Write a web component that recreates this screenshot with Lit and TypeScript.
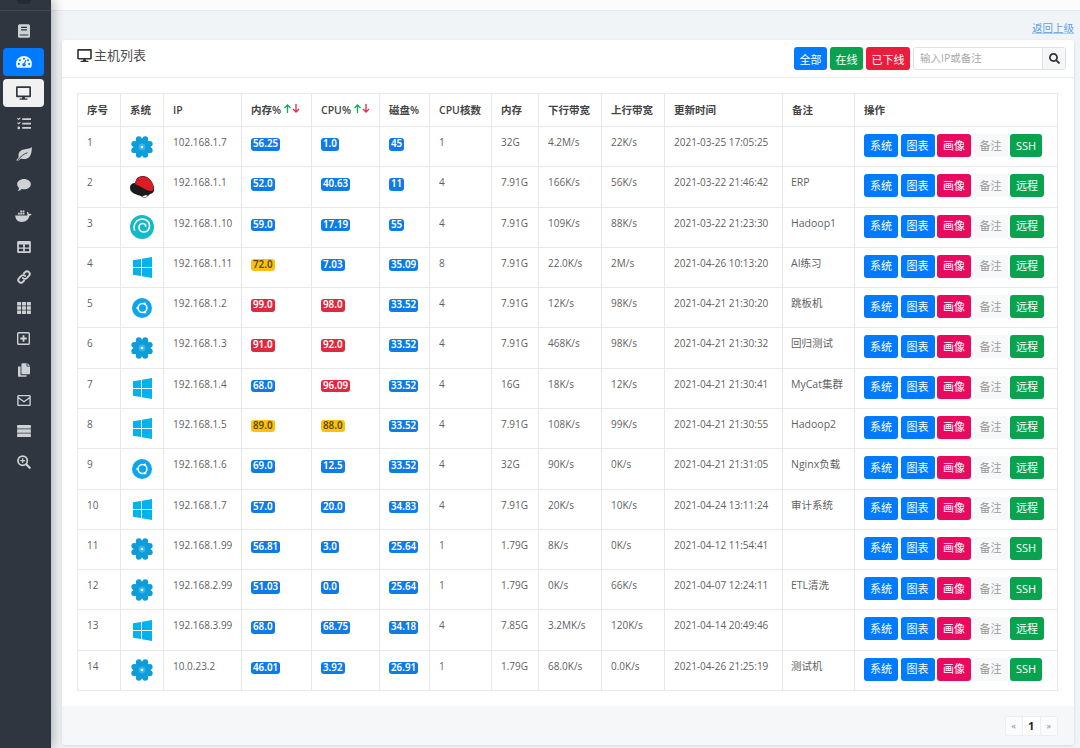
import { LitElement, html, svg, css } from 'lit';
import { customElement } from 'lit/decorators.js';

type Os = 'flower' | 'redhat' | 'swirl' | 'win' | 'ring';
interface Host {
  os: Os;
  ip: string;
  mem: string;
  cpu: string;
  disk: string;
  cores: string;
  ram: string;
  down: string;
  up: string;
  time: string;
  note: string;
  remote: string;
}

const hosts: Host[] = [
  { os: 'flower', ip: '102.168.1.7', mem: '56.25', cpu: '1.0', disk: '45', cores: '1', ram: '32G', down: '4.2M/s', up: '22K/s', time: '2021-03-25 17:05:25', note: '', remote: 'SSH' },
  { os: 'redhat', ip: '192.168.1.1', mem: '52.0', cpu: '40.63', disk: '11', cores: '4', ram: '7.91G', down: '166K/s', up: '56K/s', time: '2021-03-22 21:46:42', note: 'ERP', remote: '远程' },
  { os: 'swirl', ip: '192.168.1.10', mem: '59.0', cpu: '17.19', disk: '55', cores: '4', ram: '7.91G', down: '109K/s', up: '88K/s', time: '2021-03-22 21:23:30', note: 'Hadoop1', remote: '远程' },
  { os: 'win', ip: '192.168.1.11', mem: '72.0', cpu: '7.03', disk: '35.09', cores: '8', ram: '7.91G', down: '22.0K/s', up: '2M/s', time: '2021-04-26 10:13:20', note: 'AI练习', remote: '远程' },
  { os: 'ring', ip: '192.168.1.2', mem: '99.0', cpu: '98.0', disk: '33.52', cores: '4', ram: '7.91G', down: '12K/s', up: '98K/s', time: '2021-04-21 21:30:20', note: '跳板机', remote: '远程' },
  { os: 'flower', ip: '192.168.1.3', mem: '91.0', cpu: '92.0', disk: '33.52', cores: '4', ram: '7.91G', down: '468K/s', up: '98K/s', time: '2021-04-21 21:30:32', note: '回归测试', remote: '远程' },
  { os: 'win', ip: '192.168.1.4', mem: '68.0', cpu: '96.09', disk: '33.52', cores: '4', ram: '16G', down: '18K/s', up: '12K/s', time: '2021-04-21 21:30:41', note: 'MyCat集群', remote: '远程' },
  { os: 'win', ip: '192.168.1.5', mem: '89.0', cpu: '88.0', disk: '33.52', cores: '4', ram: '7.91G', down: '108K/s', up: '99K/s', time: '2021-04-21 21:30:55', note: 'Hadoop2', remote: '远程' },
  { os: 'ring', ip: '192.168.1.6', mem: '69.0', cpu: '12.5', disk: '33.52', cores: '4', ram: '32G', down: '90K/s', up: '0K/s', time: '2021-04-21 21:31:05', note: 'Nginx负载', remote: '远程' },
  { os: 'win', ip: '192.168.1.7', mem: '57.0', cpu: '20.0', disk: '34.83', cores: '4', ram: '7.91G', down: '20K/s', up: '10K/s', time: '2021-04-24 13:11:24', note: '审计系统', remote: '远程' },
  { os: 'flower', ip: '192.168.1.99', mem: '56.81', cpu: '3.0', disk: '25.64', cores: '1', ram: '1.79G', down: '8K/s', up: '0K/s', time: '2021-04-12 11:54:41', note: '', remote: 'SSH' },
  { os: 'flower', ip: '192.168.2.99', mem: '51.03', cpu: '0.0', disk: '25.64', cores: '1', ram: '1.79G', down: '0K/s', up: '66K/s', time: '2021-04-07 12:24:11', note: 'ETL清洗', remote: 'SSH' },
  { os: 'win', ip: '192.168.3.99', mem: '68.0', cpu: '68.75', disk: '34.18', cores: '4', ram: '7.85G', down: '3.2MK/s', up: '120K/s', time: '2021-04-14 20:49:46', note: '', remote: '远程' },
  { os: 'flower', ip: '10.0.23.2', mem: '46.01', cpu: '3.92', disk: '26.91', cores: '1', ram: '1.79G', down: '68.0K/s', up: '0.0K/s', time: '2021-04-26 21:25:19', note: '测试机', remote: 'SSH' },
];

const colWidths = [43, 43, 78, 70, 68, 50, 62, 47, 63, 63, 118, 72, 203];

// thresholds seen in the table: over 90 red, 70-90 amber, otherwise blue
function level(value: string) {
  const n = parseFloat(value);
  if (n >= 90) return 'danger';
  if (n >= 70) return 'warning';
  return 'primary';
}

const desktopPath = 'M528 0H48C21.5 0 0 21.5 0 48v320c0 26.5 21.5 48 48 48h192l-16 48h-72c-13.3 0-24 10.7-24 24s10.7 24 24 24h272c13.3 0 24-10.7 24-24s-10.7-24-24-24h-72l-16-48h192c26.5 0 48-21.5 48-48V48c0-26.5-21.5-48-48-48zm-16 352H64V64h448v288z';
const searchPath = 'M505 442.7L405.3 343c-4.5-4.5-10.6-7-17-7H372c27.6-35.3 44-79.7 44-128C416 93.1 322.9 0 208 0S0 93.1 0 208s93.1 208 208 208c48.3 0 92.7-16.4 128-44v16.3c0 6.4 2.5 12.5 7 17l99.7 99.7c9.4 9.4 24.6 9.4 33.9 0l28.3-28.3c9.4-9.4 9.4-24.6.1-34zM208 336c-70.7 0-128-57.2-128-128 0-70.7 57.2-128 128-128 70.7 0 128 57.2 128 128 0 70.7-57.2 128-128 128z';

const navIcons = [
  html`<svg viewBox="0 0 14 16" width="12" height="14"><path fill="currentColor" d="M2 0h10a2 2 0 0 1 2 2v12a2 2 0 0 1-2 2H2a2 2 0 0 1-2-2V2a2 2 0 0 1 2-2z"/><path fill="#2f3640" d="M3.500 3h7v1.500h-7zM3.500 6h7v1.500h-7zM2 12h10v1.300H2z"/></svg>`,
  html`<svg viewBox="0 0 20 16" width="16" height="13"><path fill="currentColor" d="M10 1a10 10 0 0 0-10 10c0 1.800.5 3.400 1.300 4.700h17.400A10 10 0 0 0 10 1z"/><g fill="#007bff"><circle cx="5" cy="6.500" r="1.300"/><circle cx="10" cy="4.500" r="1.300"/><circle cx="15" cy="6.500" r="1.300"/><circle cx="3.500" cy="11" r="1.300"/><circle cx="16.500" cy="11" r="1.300"/><circle cx="10" cy="12" r="2.200"/><path d="M9.300 11.500l2.500-5.500 1 .4-2 5.700z"/></g></svg>`,
  html`<svg viewBox="0 0 576 512" width="15" height="14"><path fill="currentColor" d=${desktopPath}/></svg>`,
  html`<svg viewBox="0 0 16 14" width="14" height="13"><path fill="currentColor" d="M6 1h10v2H6zM6 6h10v2H6zM6 11h10v2H6zM0 1.500l1-1 1 1L3.500 0l.8.8L2 3.200zM0 6.500l1-1 1 1L3.500 5l.8.800L2 8.200z"/><circle fill="currentColor" cx="2" cy="12" r="1.500"/></svg>`,
  html`<svg viewBox="0 0 18 16" width="16" height="14"><path fill="currentColor" d="M18 0c0 4-.5 9-3 11.500-2.500 2.500-6.500 3-9.500 1.500L2 16l-2-1 3-3.500C2 8 3.500 4.500 7.500 3.200 11 2 15.500 2.500 18 0z"/><path stroke="#2f3640" stroke-width="1" fill="none" d="M1.500 15.500C5 10.500 9 8 13 6.500"/></svg>`,
  html`<svg viewBox="0 0 16 14" width="14" height="12"><path fill="currentColor" d="M8 0c4.400 0 8 2.700 8 6s-3.600 6-8 6c-1 0-1.900-.1-2.700-.4C4 12.700 2.500 14 .5 14c1-1 1.700-2.300 1.800-3.700C.9 9.300 0 7.700 0 6c0-3.300 3.600-6 8-6z"/></svg>`,
  html`<svg viewBox="0 0 18 13" width="17" height="12"><path fill="currentColor" d="M0 6h13c.4-1.200.2-2.400-.4-3.300l1-.7c.7.600 1.200 1.400 1.300 2.300 1-.3 2-.2 3 .4-.5 1-1.400 1.500-2.500 1.600C14.500 10.500 11.500 13 7 13 2.500 13 .3 10 0 6z"/><path fill="currentColor" d="M3 3h2v2H3zM5.500 3h2v2h-2zM8 3h2v2H8zM5.500 .5h2v2h-2zM8 .5h2v2H8z"/></svg>`,
  html`<svg viewBox="0 0 16 14" width="14" height="12"><path fill="currentColor" d="M1.500 0h13A1.500 1.500 0 0 1 16 1.500v11a1.500 1.500 0 0 1-1.500 1.500h-13A1.500 1.500 0 0 1 0 12.500v-11A1.500 1.500 0 0 1 1.500 0z"/><path fill="#2f3640" d="M2 4h5v3.500H2zM9 4h5v3.500H9zM2 9h5v3H2zM9 9h5v3H9z"/></svg>`,
  html`<svg viewBox="0 0 16 16" width="14" height="14"><path fill="none" stroke="currentColor" stroke-width="2.200" stroke-linecap="round" d="M6.800 9.200a3 3 0 0 0 4.300 0l2.500-2.500a3 3 0 0 0-4.300-4.300L8 3.700M9.200 6.800a3 3 0 0 0-4.300 0L2.400 9.300a3 3 0 0 0 4.300 4.300L8 12.300"/></svg>`,
  html`<svg viewBox="0 0 16 14" width="14" height="12"><path fill="currentColor" d="M0 0h4.600v4H0zM5.700 0h4.600v4H5.700zM11.400 0H16v4h-4.600zM0 5h4.600v4H0zM5.700 5h4.600v4H5.700zM11.400 5H16v4h-4.600zM0 10h4.600v4H0zM5.700 10h4.600v4H5.700zM11.400 10H16v4h-4.600z"/></svg>`,
  html`<svg viewBox="0 0 14 14" width="13" height="13"><path fill="currentColor" d="M2 0h10a2 2 0 0 1 2 2v10a2 2 0 0 1-2 2H2a2 2 0 0 1-2-2V2a2 2 0 0 1 2-2zm0 1.500a.5.5 0 0 0-.5.5v10a.5.5 0 0 0 .5.5h10a.5.5 0 0 0 .5-.5V2a.5.5 0 0 0-.5-.5zM6 3.500h2V6h2.500v2H8v2.500H6V8H3.500V6H6z"/></svg>`,
  html`<svg viewBox="0 0 14 16" width="12" height="14"><path fill="currentColor" d="M5 0h5v4h4v8.500a.5.500 0 0 1-.5.500H5a1 1 0 0 1-1-1V1a1 1 0 0 1 1-1zM11 0l3 3h-3zM0 4h3v10h7v1a1 1 0 0 1-1 1H1a1 1 0 0 1-1-1z"/></svg>`,
  html`<svg viewBox="0 0 16 13" width="14" height="11"><path fill="none" stroke="currentColor" stroke-width="1.600" d="M1.500.8h13a.7.700 0 0 1 .7.700v10a.7.700 0 0 1-.7.700h-13a.7.700 0 0 1-.7-.700v-10a.7.700 0 0 1 .7-.700zM1 3l7 5 7-5"/></svg>`,
  html`<svg viewBox="0 0 16 14" width="14" height="12"><path fill="currentColor" d="M0 0h16v4H0zM0 5h16v4H0zM0 10h16v4H0z"/></svg>`,
  html`<svg viewBox="0 0 16 16" width="14" height="14"><circle cx="6.500" cy="6.500" r="5.300" fill="none" stroke="currentColor" stroke-width="2"/><path stroke="currentColor" stroke-width="2.600" stroke-linecap="round" d="M10.500 10.500l4 4"/><path fill="currentColor" d="M5.800 3.800h1.400v2h2v1.400h-2v2H5.800v-2h-2V5.800h2z"/></svg>`,
];

function osIcon(os: Os) {
  switch (os) {
    case 'flower':
      return html`<svg viewBox="0 0 24 24" width="24" height="24">
        <g fill="#0d9ddb">
          ${[22.5, 67.5, 112.5, 157.5, 202.5, 247.5, 292.5, 337.5].map(a => {
            const rad = (a * Math.PI) / 180;
            return svg`<circle cx=${12 + 8.4 * Math.cos(rad)} cy=${12 + 8.4 * Math.sin(rad)} r="2.900"></circle>`;
          })}
          <circle cx="12" cy="12" r="8.800"></circle>
        </g>
        <circle cx="12" cy="12" r="3.400" fill="#38b2e8"></circle>
        <circle cx="12" cy="12" r="1.300" fill="#e6f6fd"></circle>
      </svg>`;
    case 'redhat':
      return html`<svg viewBox="0 0 24 22" width="24" height="22">
        <path fill="#1b1b1b" d="M0 12C0 8 3 7 5 7l1-3c1-3 4-4 7-4 5 0 9 4 11 11 1 4-1 7-4 7l-2 2c-2 2-5 2-7 0C7 19 0 17 0 12z"/>
        <path fill="#dc1c24" d="M5 8l1.500-4C7.500 1.500 10 .5 13 .5c5 0 9 3.500 10.500 10.500.5 3-1 4.500-3.500 4C15 14 11 10.500 5 8z"/>
        <path fill="#fff" d="M12 20.500c2 .8 4 1 6-.5l-2-1z"/>
      </svg>`;
    case 'swirl':
      return html`<svg viewBox="0 0 24 24" width="24" height="24">
        <circle cx="12" cy="12" r="12" fill="#12b9c6"></circle>
        <path fill="none" stroke="#fff" stroke-width="1.600" stroke-linecap="round" d="M4.500 15c-1.500-4 .5-9 5-10.500 4.500-1.500 9.500 1 10 5.500.5 4-2 7-5.500 7-3 0-5-2-5-4.500 0-2.300 1.800-4 3.700-4 1.800 0 3 1.300 3 2.800"/>
      </svg>`;
    case 'win':
      return html`<svg viewBox="0 0 19 21" width="19" height="21">
        <path fill="#00b2ee" d="M0 3.200l8-1.300v8H0zM9 1.700L19 0v9.900H9zM0 11h8v8l-8-1.300zM9 11h10v10L9 19.300z"/>
      </svg>`;
    case 'ring':
      return html`<svg viewBox="0 0 20 20" width="20" height="20">
        <circle cx="10" cy="10" r="10" fill="#0ea5ef"></circle>
        <circle cx="10.500" cy="10" r="4.400" fill="none" stroke="#fff" stroke-width="1.500"></circle>
        <circle cx="5.500" cy="10" r="1.200" fill="#fff"></circle>
        <circle cx="13" cy="5.800" r="1.200" fill="#fff"></circle>
        <circle cx="13" cy="14.200" r="1.200" fill="#fff"></circle>
      </svg>`;
  }
}

const sortArrows = html`<svg class="sort" viewBox="0 0 18 9" width="18" height="9">
  <path fill="none" stroke="#17a85a" stroke-width="1.300" d="M4.500 9V1M1.500 4l3-3 3 3"/>
  <path fill="none" stroke="#e8264a" stroke-width="1.300" d="M13 0v8M10 5l3 3 3-3"/>
</svg>`;

@customElement('app-root')
export class AppRoot extends LitElement {
  static styles = css`
    :host {
      display: flex;
      width: 1080px;
      height: 748px;
      overflow: hidden;
      background: #f1f4f7;
      color: #555;
      font-family: 'Open Sans', 'Noto Sans CJK SC', sans-serif;
      font-size: 10px;
    }

    .sidebar {
      flex: none;
      width: 51px;
      background: #2f3640;
      box-shadow: 3px 0 10px rgba(0, 0, 0, 0.25);
      box-sizing: border-box;
      padding: 17px 7px 0 3px;
      display: flex;
      flex-direction: column;
      gap: 2.8px;
      position: relative;
    }

    .sidebar::before {
      content: '';
      position: absolute;
      left: 0;
      right: 0;
      top: 10px;
      border-top: 1px solid #3f4752;
    }

    /* cut-off avatar at the very top of the rail */
    .sidebar::after {
      content: '';
      position: absolute;
      left: 17px;
      top: 0;
      width: 14px;
      height: 4px;
      border-radius: 0 0 6px 6px;
      background: #262b33;
    }

    .nav {
      height: 28px;
      display: flex;
      align-items: center;
      justify-content: center;
      border-radius: 4px;
      color: #cfd2d5;
    }

    .nav.active {
      background: #007bff;
      color: #eef5ff;
    }

    .nav.current {
      background: #f1f1f1;
      color: #2f3640;
    }

    .main {
      flex: 1;
      min-width: 0;
      display: flex;
      flex-direction: column;
    }

    .topbar {
      height: 10px;
      background: #fcfcfd;
      border-bottom: 1px solid #e3e7ea;
    }

    .back {
      height: 29px;
      box-sizing: border-box;
      padding: 10px 6px 0 0;
      text-align: right;
      font-size: 10.5px;
      line-height: 15px;
      color: #5a9fe6;
      text-decoration: underline;
      text-decoration-color: #a9cdf2;
    }

    .card {
      margin: 0 6px 3px 11px;
      flex: 1;
      background: #fff;
      border-radius: 3px;
      box-shadow: 0 1px 3px rgba(0, 0, 0, 0.12);
      display: flex;
      flex-direction: column;
    }

    .card-header {
      height: 38px;
      flex: none;
      box-sizing: border-box;
      border-bottom: 1px solid #eceef0;
      padding: 7px 8px 0 15px;
      display: flex;
      align-items: flex-start;
    }

    .title {
      display: flex;
      align-items: center;
      gap: 2px;
      font-size: 13px;
      line-height: 18px;
      color: #4d4d4d;
      margin-top: -1px;
    }

    .title svg {
      color: #333;
    }

    .tools {
      margin-left: auto;
      display: flex;
      align-items: flex-start;
      gap: 3px;
    }

    .btn {
      height: 23px;
      padding: 0 5.5px;
      box-sizing: border-box;
      display: flex;
      align-items: center;
      justify-content: center;
      border-radius: 3px;
      color: #fff;
      font-size: 11px;
      white-space: nowrap;
    }

    .primary {
      background: #007bff;
    }

    .green {
      background: #09a350;
    }

    .red {
      background: #ec1c3c;
    }

    .pink {
      background: #e80a5e;
    }

    .muted {
      background: #f7f8f9;
      color: #9a9a9a;
    }

    .search {
      display: flex;
      height: 23px;
      width: 153px;
      box-sizing: border-box;
      border: 1px solid #dfe2e5;
      border-radius: 3px;
      overflow: hidden;
    }

    .search span {
      flex: 1;
      padding-left: 6px;
      line-height: 21px;
      color: #aaa;
      font-size: 10.5px;
    }

    .search div {
      width: 22px;
      background: #f5f6f7;
      border-left: 1px solid #dfe2e5;
      display: flex;
      align-items: center;
      justify-content: center;
      color: #333;
    }

    .card-body {
      flex: none;
      padding: 15px 16px 15px 15px;
    }

    table {
      width: 980px;
      table-layout: fixed;
      border-collapse: collapse;
    }

    th,
    td {
      border: 1px solid #e6e8ea;
      padding: 7px 9px 0;
      vertical-align: top;
      text-align: left;
      line-height: 16px;
      white-space: nowrap;
      overflow: hidden;
    }

    th {
      height: 33px;
      box-sizing: border-box;
      color: #444;
      font-weight: 600;
      font-size: 10.5px;
      padding-top: 8px;
    }

    td {
      height: 40.29px;
      box-sizing: border-box;
      color: #5f5f5f;
    }

    td.note {
      font-size: 10.5px;
      padding-left: 8px;
    }

    .sort {
      vertical-align: 1px;
      margin-left: 2px;
    }

    td.os {
      padding: 0;
      vertical-align: middle;
    }

    td.os svg {
      display: block;
      margin: 0 auto;
    }

    .badge {
      display: inline-block;
      padding: 0 2px;
      height: 12.5px;
      line-height: 12.5px;
      border-radius: 3px;
      font-family: 'Noto Sans', sans-serif;
      font-size: 9.8px;
      font-weight: 600;
      color: #fff;
      vertical-align: -1px;
    }

    .badge.primary {
      background: #0f7be6;
    }

    .badge.danger {
      background: #e2283f;
    }

    .badge.warning {
      background: #fcc10f;
      color: #5b4a10;
    }

    td.actions {
      padding: 7px 0 0 9px;
    }

    .actions div {
      display: flex;
      gap: 2.5px;
    }

    .actions .btn {
      padding: 0 6px;
    }

    .card-footer {
      flex: 1;
      background: #f6f7f8;
      display: flex;
      justify-content: flex-end;
      align-items: flex-start;
      padding: 10px 16px 0 0;
      border-radius: 0 0 3px 3px;
    }

    .pager {
      display: flex;
      height: 20px;
      background: #fff;
      border: 1px solid #eceef0;
      box-sizing: border-box;
      border-radius: 2px;
    }

    .pager span {
      display: flex;
      align-items: center;
      justify-content: center;
      width: 16.5px;
      color: #6f93c9;
      font-size: 9px;
      background: #fafbfc;
    }

    .pager span.on {
      background: #fff;
      color: #222;
      font-weight: 700;
      font-size: 11px;
      border-left: 1px solid #eceef0;
      border-right: 1px solid #eceef0;
    }
  `;

  render() {
    return html`
      ${this.sidebar}
      <div class="main">
        <div class="topbar"></div>
        <div class="back">返回上级</div>
        <div class="card">
          ${this.cardHeader}
          <div class="card-body">${this.table}</div>
          <div class="card-footer">
            <div class="pager"><span>«</span><span class="on">1</span><span>»</span></div>
          </div>
        </div>
      </div>
    `;
  }

  private get sidebar() {
    return html`<div class="sidebar">
      ${navIcons.map((icon, i) => {
        const state = i === 1 ? 'active' : i === 2 ? 'current' : '';
        return html`<div class="nav ${state}">${icon}</div>`;
      })}
    </div>`;
  }

  private get cardHeader() {
    return html`<div class="card-header">
      <div class="title">
        <svg viewBox="0 0 576 512" width="15" height="13"><path fill="currentColor" d=${desktopPath}></path></svg>
        主机列表
      </div>
      <div class="tools">
        <div class="btn primary">全部</div>
        <div class="btn green">在线</div>
        <div class="btn red">已下线</div>
        <div class="search">
          <span>输入IP或备注</span>
          <div><svg viewBox="0 0 512 512" width="11" height="11"><path fill="currentColor" d=${searchPath}></path></svg></div>
        </div>
      </div>
    </div>`;
  }

  private get table() {
    return html`<table>
      <colgroup>
        ${colWidths.map(w => html`<col style="width:${w}px" />`)}
      </colgroup>
      <thead>
        <tr>
          <th>序号</th>
          <th>系统</th>
          <th>IP</th>
          <th>内存%${sortArrows}</th>
          <th>CPU%${sortArrows}</th>
          <th>磁盘%</th>
          <th>CPU核数</th>
          <th>内存</th>
          <th>下行带宽</th>
          <th>上行带宽</th>
          <th>更新时间</th>
          <th>备注</th>
          <th>操作</th>
        </tr>
      </thead>
      <tbody>
        ${hosts.map((h, i) => this.row(h, i))}
      </tbody>
    </table>`;
  }

  private row(h: Host, i: number) {
    return html`<tr>
      <td>${i + 1}</td>
      <td class="os">${osIcon(h.os)}</td>
      <td>${h.ip}</td>
      <td><span class="badge ${level(h.mem)}">${h.mem}</span></td>
      <td><span class="badge ${level(h.cpu)}">${h.cpu}</span></td>
      <td><span class="badge primary">${h.disk}</span></td>
      <td>${h.cores}</td>
      <td>${h.ram}</td>
      <td>${h.down}</td>
      <td>${h.up}</td>
      <td>${h.time}</td>
      <td class="note">${h.note}</td>
      <td class="actions">
        <div>
          <div class="btn primary">系统</div>
          <div class="btn primary">图表</div>
          <div class="btn pink">画像</div>
          <div class="btn muted">备注</div>
          <div class="btn green">${h.remote}</div>
        </div>
      </td>
    </tr>`;
  }
}
